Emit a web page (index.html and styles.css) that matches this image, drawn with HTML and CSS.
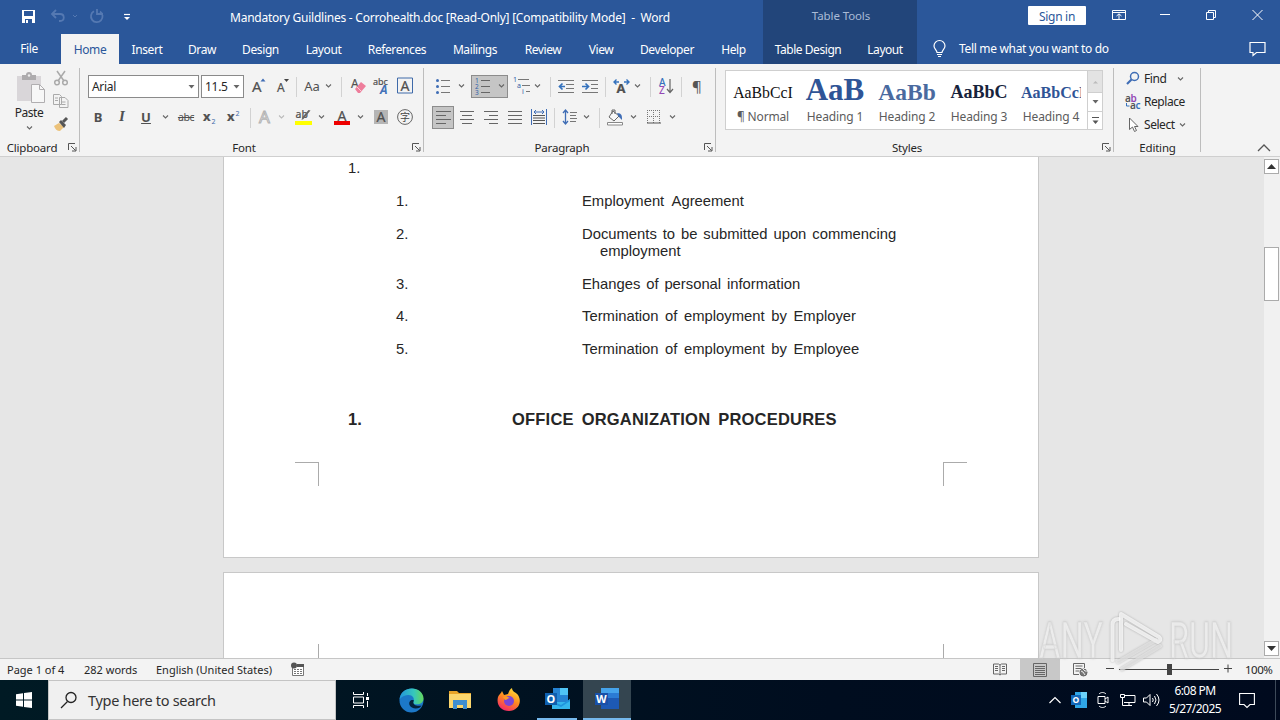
FILE: index.html
```html
<!DOCTYPE html>
<html lang="en">
<head>
  <meta charset="UTF-8">
  <meta name="viewport" content="width=device-width, initial-scale=1.0">
  <title>Mandatory Guildlines - Corrohealth.doc - Word</title>
  <link rel="stylesheet" href="styles.css">
</head>
<body>
  <!-- shared symbols -->
  <svg class="defs" width="0" height="0">
    <symbol id="chev" viewBox="0 0 7 4"><path d="M1 .5l2.500 2.500L6 .5" fill="none" stroke="#666" stroke-width="1.1"/></symbol>
    <symbol id="tri" viewBox="0 0 7 4"><path d="M.5 0h6L3.500 3.500z" fill="#666"/></symbol>
    <symbol id="launch" viewBox="0 0 9 9"><path d="M.5 7V.5H7M3 3l4.500 4.500M8 4v4H4" fill="none" stroke="#555"/></symbol>
  </svg>

  <header class="header">
    <div class="head-main">
      <div class="titlebar">
        <svg class="qat" width="120" height="20" viewBox="0 0 120 20" fill="none">
          <path d="M2 3h13v13H2z" fill="#fff"/><path d="M4 4h9v5H4zM5 12h7v4H5z" fill="#2b579a"/><path d="M6 13h2v3H6z" fill="#fff"/>
          <path d="M36 3l-4 4 4 4M32 7h8c5 0 5 7 0 7h-1" stroke="#5579b2" stroke-width="1.800"/>
          <path d="M53 8l2 2 2-2" stroke="#5579b2"/>
          <path d="M80 4.500a5.800 5.800 0 1 1-6-.3M77 2v5h6" stroke="#5579b2" stroke-width="1.800"/>
          <path d="M104 7.500h6" stroke="#fff" stroke-width="1.200"/><path d="M104 10h6l-3 3z" fill="#fff"/>
        </svg>
        <span class="doc-title">Mandatory Guildlines - Corrohealth.doc [Read-Only] [Compatibility Mode]  -  Word</span>
      </div>
      <nav class="tabs">
        <a class="file">File</a><a class="active">Home</a><a>Insert</a><a>Draw</a><a>Design</a><a>Layout</a><a>References</a><a>Mailings</a><a>Review</a><a>View</a><a>Developer</a><a>Help</a>
      </nav>
    </div>
    <div class="head-context">
      <div class="context-title">Table Tools</div>
      <nav class="context-tabs"><a>Table Design</a><a>Layout</a></nav>
    </div>
    <div class="head-right">
      <div class="window-row">
        <button class="signin">Sign in</button>
        <svg width="14" height="12" viewBox="0 0 14 12" fill="none" stroke="#fff"><path d="M.5 1.500h13v9H.5zM.5 3.500h13M7 10V5M4.500 7L7 4.800 9.500 7"/></svg>
        <svg width="10" height="12" viewBox="0 0 10 12"><path d="M0 5.500h10" stroke="#fff"/></svg>
        <svg width="10" height="12" viewBox="0 0 10 12" fill="none" stroke="#fff"><path d="M.5 3.500h7v7h-7zM2.500 3.500v-2h7v7h-2"/></svg>
        <svg width="11" height="12" viewBox="0 0 11 12" stroke="#fff"><path d="M.5 1l10 10M10.500 1l-10 10"/></svg>
      </div>
      <div class="tell-row">
        <svg width="13" height="18" viewBox="0 0 13 18" fill="none" stroke="#fff" stroke-width="1.200"><path d="M4 12.500c0-2.500-3-3.500-3-6.500a5.300 5.300 0 0 1 11 0c0 3-3 4-3 6.500zM4 14.500h5M5 16.500h3"/></svg>
        <span>Tell me what you want to do</span>
        <svg class="comment" width="17" height="16" viewBox="0 0 17 16" fill="none" stroke="#fff" stroke-width="1.200"><path d="M1 1.500h15v10H7.500l-3.500 3v-3H1z"/></svg>
      </div>
    </div>
  </header>

  <section class="ribbon">
    <div class="group clipboard">
      <div class="clip-body">
        <div class="paste">
          <svg width="30" height="32" viewBox="0 0 30 32"><path d="M1 4h24v25H1z" fill="#d9d6d9"/><path d="M6 3h4a3 3 0 0 1 6 0h4v5H6z" fill="#adabad"/><circle cx="13" cy="3.500" r="1.200" fill="#eee"/><path d="M15.500 12.500h8l5 5v13h-13z" fill="#f7f7f7" stroke="#b0aeb0"/><path d="M23.500 12.500v5h5" fill="none" stroke="#b0aeb0"/></svg>
          <span>Paste</span>
          <svg width="7" height="4"><use href="#chev"/></svg>
        </div>
        <div class="clip-side">
          <svg width="16" height="16" viewBox="0 0 16 16" fill="none" stroke="#aaa" stroke-width="1.500"><path d="M4 1l7 10M12 1L5 11"/><circle cx="4" cy="12.500" r="2.300"/><circle cx="12" cy="12.500" r="2.300"/></svg>
          <svg width="16" height="16" viewBox="0 0 16 16" fill="#f3f3f3" stroke="#aaa"><path d="M.5 1.500h6l2 2v8h-8zM6.500 4.500h5.500l3 3v7H6.500zM8.500 9h4M8.500 11.500h4M2 5h3M2 7.500h3"/></svg>
          <svg width="16" height="16" viewBox="0 0 16 16"><path d="M1 10l5-3 5 4-4 4c-3 0-5-2-6-5z" fill="#ecc27a"/><path d="M6 6l2-2 5 5-2 3z" fill="#555"/><path d="M10 6l4-4" stroke="#555" stroke-width="3"/></svg>
        </div>
      </div>
      <div class="group-label">Clipboard<svg width="9" height="9"><use href="#launch"/></svg></div>
    </div>

    <div class="group font">
      <div class="row font-row1">
        <div class="combo">Arial<svg width="7" height="4"><use href="#tri"/></svg></div>
        <div class="combo size">11.5<svg width="7" height="4"><use href="#tri"/></svg></div>
        <svg width="14" height="18" viewBox="0 0 14 18"><text x="0" y="15" class="ico" font-size="15">A</text><path d="M8.500 4.500l2.500-3 2.500 3z" fill="#3f6db5"/></svg>
        <svg width="14" height="18" viewBox="0 0 14 18"><text x="1" y="15" class="ico" font-size="12">A</text><path d="M8 2h5l-2.500 3z" fill="#444"/></svg>
        <i class="sep"></i>
        <span class="aa">Aa</span>
        <svg width="7" height="4"><use href="#chev"/></svg>
        <i class="sep"></i>
        <svg width="16" height="18" viewBox="0 0 16 18"><text x="1" y="11" class="ico" font-size="12">A</text><path d="M5 12l6-7 5 4-6 7H8z" fill="#ee7d9b"/><path d="M7 10l4 4" stroke="#f8cdd7"/></svg>
        <svg width="16" height="18" viewBox="0 0 16 18"><text x="0" y="7.500" class="ico" font-size="9">abc</text><text x="7" y="17" font-family="Noto Sans" font-style="italic" font-weight="bold" font-size="12" fill="#4472b8">A</text></svg>
        <svg width="16" height="17" viewBox="0 0 16 17"><path d="M.5 1h15v15H.5z" fill="none" stroke="#3f6aa9"/><text x="3.500" y="13.500" class="ico" font-size="14">A</text></svg>
      </div>
      <div class="row font-row2">
        <b class="ltr">B</b>
        <i class="ltr serif">I</i>
        <u class="ltr">U</u>
        <svg width="7" height="4"><use href="#chev"/></svg>
        <s class="strike">abc</s>
        <svg width="14" height="16" viewBox="0 0 14 16"><text x="0" y="12" class="ico bold" font-size="13">x</text><text x="8.500" y="15" font-family="Noto Sans" font-size="7" fill="#3f6aa9">2</text></svg>
        <svg width="14" height="16" viewBox="0 0 14 16"><text x="0" y="12" class="ico bold" font-size="13">x</text><text x="8.500" y="7" font-family="Noto Sans" font-size="7" fill="#3f6aa9">2</text></svg>
        <i class="sep"></i>
        <svg width="14" height="16" viewBox="0 0 14 16"><text x="1" y="14" font-family="Noto Sans" font-size="17" fill="#f8f8f8" stroke="#b3b3b3" stroke-width="1">A</text></svg>
        <svg class="dim" width="7" height="4"><use href="#chev"/></svg>
        <svg class="end" width="20" height="18" viewBox="0 0 20 18"><text x="1.500" y="10" class="ico" font-size="10.500">ab</text><path d="M16.500 2.500l-7 8.500-2 1 1-3 6-7z" fill="#666"/><path d="M1 13h17v4H1z" fill="#ff0"/></svg>
        <svg width="7" height="4"><use href="#chev"/></svg>
        <svg width="16" height="18" viewBox="0 0 16 18"><text x="3.500" y="12.500" class="ico" font-size="14">A</text><path d="M0 13h16v4H0z" fill="#e00"/></svg>
        <svg width="7" height="4"><use href="#chev"/></svg>
        <svg width="14" height="16" viewBox="0 0 14 16"><path d="M0 1h14v14H0z" fill="#b5b5b5"/><text x="2.500" y="13" class="ico" font-size="14">A</text></svg>
        <svg width="16" height="16" viewBox="0 0 16 16"><circle cx="8" cy="8" r="7.400" fill="none" stroke="#666"/><text x="3" y="12" font-family="Noto Sans CJK SC" font-size="10" fill="#444">字</text></svg>
      </div>
      <div class="group-label">Font<svg width="9" height="9"><use href="#launch"/></svg></div>
    </div>

    <div class="group paragraph">
      <div class="row para-row1">
        <svg width="16" height="16" viewBox="0 0 16 16"><path d="M6 2.500h9M6 8.500h9M6 14.500h9" stroke="#777"/><g fill="#3f6db5"><circle cx="2.500" cy="2.500" r="1.500"/><circle cx="2.500" cy="8.500" r="1.500"/><circle cx="2.500" cy="14.500" r="1.500"/></g></svg>
        <svg width="7" height="4"><use href="#chev"/></svg>
        <div class="pressed num">
          <svg width="16" height="18" viewBox="0 0 16 18"><path d="M6 3.500h9M6 9.500h9M6 15.500h9" stroke="#666"/><g font-family="Noto Sans" font-size="6.500" fill="#2f61a8"><text x="0" y="5.500">1</text><text x="0" y="11.500">2</text><text x="0" y="17.500">3</text></g></svg>
          <svg width="7" height="4"><use href="#chev"/></svg>
        </div>
        <svg width="18" height="17" viewBox="0 0 18 17"><path d="M5 2.500h11M9 8.500h8M13 14.500h4" stroke="#777"/><g font-family="Noto Sans" font-size="7" fill="#2f61a8"><text x="0" y="5">1</text><text x="4" y="11">a</text><text x="9" y="17">i</text></g></svg>
        <svg width="7" height="4"><use href="#chev"/></svg>
        <i class="sep"></i>
        <svg width="16" height="16" viewBox="0 0 16 16"><path d="M0 2.500h16M8 6.500h8M8 10.500h8M0 14.500h16" stroke="#777"/><path d="M7 8.500H2M4.500 5.500l-3 3 3 3" fill="none" stroke="#3572bd" stroke-width="1.700"/></svg>
        <svg class="end" width="16" height="16" viewBox="0 0 16 16"><path d="M0 2.500h16M9 6.500h7M9 10.500h7M0 14.500h16" stroke="#777"/><path d="M0 8.500h6M3.500 5.500l3 3-3 3" fill="none" stroke="#3572bd" stroke-width="1.700"/></svg>
        <i class="sep"></i>
        <svg width="17" height="16" viewBox="0 0 17 16"><text x="3.500" y="15" class="ico bold" font-size="13">A</text><path d="M1 4h5M3.500 1.500L1 4l2.500 2.500M11 4h5M13.500 1.500L16 4l-2.500 2.500" fill="none" stroke="#3572bd" stroke-width="1.400"/></svg>
        <svg width="7" height="4"><use href="#chev"/></svg>
        <i class="sep"></i>
        <svg width="16" height="18" viewBox="0 0 16 18"><g font-family="Noto Sans" font-weight="500" font-size="10"><text x="1" y="8.500" fill="#3572bd">A</text><text x="1" y="17" fill="#9347b5">Z</text></g><path d="M12 2v13M9 12l3 3.500L15 12" fill="none" stroke="#666" stroke-width="1.200"/></svg>
        <i class="sep"></i>
        <span class="pilcrow">¶</span>
      </div>
      <div class="row para-row2">
        <div class="pressed left"><svg width="15" height="14" viewBox="0 0 15 14"><path d="M0 1.500h15M0 5.500h10M0 9.500h15M0 13.500h10" stroke="#666"/></svg></div>
        <svg width="14" height="14" viewBox="0 0 14 14"><path d="M0 1.500h14M2 5.500h10M0 9.500h14M2 13.500h10" stroke="#666"/></svg>
        <svg width="14" height="14" viewBox="0 0 14 14"><path d="M0 1.500h14M5 5.500h9M0 9.500h14M5 13.500h9" stroke="#666"/></svg>
        <svg width="14" height="14" viewBox="0 0 14 14"><path d="M0 1.500h14M0 5.500h14M0 9.500h14M0 13.500h14" stroke="#666"/></svg>
        <svg width="16" height="16" viewBox="0 0 16 16"><path d="M.5 0v16M15.500 0v16" stroke="#3f6db5"/><path d="M2 6.500h12M2 9h12M2 11.500h12M2 14.500h12" stroke="#555"/><path d="M3 3h10M5 1L3 3l2 2M11 1l2 2-2 2" fill="none" stroke="#3f6db5"/></svg>
        <i class="sep"></i>
        <svg width="16" height="16" viewBox="0 0 16 16"><path d="M8 3.500h7M8 6.500h6M8 9.500h7M8 12.500h6" stroke="#777"/><path d="M3.500 1v14M1 4l2.500-3L6 4M1 12l2.500 3L6 12" fill="none" stroke="#3f6db5" stroke-width="1.300"/></svg>
        <svg width="7" height="4"><use href="#chev"/></svg>
        <i class="sep"></i>
        <svg width="17" height="16" viewBox="0 0 17 16"><path d="M6 2l6 5-5 5-5-4z" fill="#f8f8f8" stroke="#666"/><path d="M5 5V1h3v4" fill="none" stroke="#666"/><path d="M10 4c5 0 5 3 5 7l-3-3z" fill="#3f6db5"/><path d="M.5 13.500h15V16H.5z" fill="#fff" stroke="#888"/></svg>
        <svg width="7" height="4"><use href="#chev"/></svg>
        <svg width="14" height="14" viewBox="0 0 14 14"><path d="M.5 0v13M6.500 0v13M12.500 0v13M0 .5h13M0 6.500h13" stroke="#777" stroke-dasharray="1 1"/><path d="M0 13h14" stroke="#555"/></svg>
        <svg width="7" height="4"><use href="#chev"/></svg>
      </div>
      <div class="group-label">Paragraph<svg width="9" height="9"><use href="#launch"/></svg></div>
    </div>

    <div class="group styles">
      <div class="gallery">
        <div class="style"><div class="sample normal"><span>AaBbCcI</span></div><span>¶ Normal</span></div>
        <div class="style"><div class="sample h1"><span>AaB</span></div><span>Heading 1</span></div>
        <div class="style"><div class="sample h2"><span>AaBb</span></div><span>Heading 2</span></div>
        <div class="style"><div class="sample h3"><span>AaBbC</span></div><span>Heading 3</span></div>
        <div class="style"><div class="sample h4"><span>AaBbCcI</span></div><span>Heading 4</span></div>
        <div class="gallery-scroll">
          <div class="off"><svg width="7" height="4" viewBox="0 0 7 4"><path d="M1 3.500L3.500 1 6 3.500z" fill="#bbb"/></svg></div>
          <div><svg width="7" height="4"><use href="#tri"/></svg></div>
          <div><svg width="7" height="8" viewBox="0 0 7 8"><path d="M0 .5h7" stroke="#555"/><path d="M.5 3.500h6l-3 3.500z" fill="#555"/></svg></div>
        </div>
      </div>
      <div class="group-label">Styles<svg width="9" height="9"><use href="#launch"/></svg></div>
    </div>

    <div class="group editing">
      <div class="edit-list">
        <div><svg width="16" height="16" viewBox="0 0 16 16" fill="none" stroke="#3f6db5"><circle cx="9.500" cy="5.500" r="4" stroke-width="1.500"/><path d="M6.500 8.500L2 13" stroke-width="2.200"/></svg><span>Find</span><svg class="far" width="7" height="4"><use href="#chev"/></svg></div>
        <div><svg width="16" height="16" viewBox="0 0 16 16"><g font-family="Noto Sans" font-weight="600" font-size="10"><text x="0" y="7.500" fill="#555">a<tspan fill="#9347b5">b</tspan></text><text x="5" y="15" fill="#555">a<tspan fill="#3572bd">c</tspan></text></g><path d="M1.500 9v3h3" fill="none" stroke="#3572bd"/></svg><span>Replace</span></div>
        <div><svg width="16" height="16" viewBox="0 0 16 16"><path d="M4.500 1v11.500l3-2.500 2 4.500 2-1-2-4h3.500z" fill="#fff" stroke="#666"/></svg><span>Select</span><svg class="near" width="7" height="4"><use href="#chev"/></svg></div>
      </div>
      <div class="group-label">Editing</div>
    </div>
    <svg class="collapse" width="14" height="8" viewBox="0 0 14 8"><path d="M1 7l6-6 6 6" fill="none" stroke="#555" stroke-width="1.300"/></svg>
  </section>

  <main class="workspace">
    <div class="pages">
      <article class="page first">
        <div class="line outer"><span class="n">1.</span></div>
        <div class="line inner"><span class="n">1.</span><p class="l1">Employment Agreement</p></div>
        <div class="line inner"><span class="n">2.</span><p class="l2">Documents to be submitted upon commencing<br><span class="hang">employment</span></p></div>
        <div class="line inner three"><span class="n">3.</span><p class="l3">Ehanges of personal information</p></div>
        <div class="line inner"><span class="n">4.</span><p class="l4">Termination of employment by Employer</p></div>
        <div class="line inner"><span class="n">5.</span><p class="l4">Termination of employment by Employee</p></div>
        <div class="line heading"><span class="n">1.</span><h2>OFFICE ORGANIZATION PROCEDURES</h2></div>
        <div class="crops"><i class="crop tl"></i><i class="crop tr"></i></div>
      </article>
      <article class="page second">
        <div class="crops"><i class="crop side-l"></i><i class="crop side-r"></i></div>
      </article>
    </div>
    <div class="scrollbar">
      <div class="arrow"><svg width="9" height="5"><path d="M0 5h9L4.500 0z" fill="#333"/></svg></div>
      <div class="thumb"></div>
      <div class="arrow down"><svg width="9" height="5"><path d="M0 0h9L4.500 5z" fill="#333"/></svg></div>
    </div>
  </main>

  <footer class="status">
    <span class="s-page">Page 1 of 4</span>
    <span class="s-words">282 words</span>
    <span class="s-lang">English (United States)</span>
    <svg width="14" height="14" viewBox="0 0 14 14"><path d="M1.500 4v8.500h11V2.500H6" fill="#fff" stroke="#777"/><path d="M6 1h7v3H6z" fill="#555"/><circle cx="3" cy="2.500" r="3" fill="#555"/><path d="M3 6.500h9M3 8.500h9M3 10.500h9" stroke="#777" stroke-dasharray="2 1"/></svg>
    <div class="views">
      <svg width="14" height="13" viewBox="0 0 14 13" fill="none" stroke="#666"><path d="M7 2L5.500 1H.5v10h5L7 12l1.500-1h5V1h-5zV12M2 3.500h3M2 5.500h3M2 7.500h3M9 3.500h3M9 5.500h3M9 7.500h3"/></svg>
      <div class="view-on"><svg width="14" height="14" viewBox="0 0 14 14" fill="none" stroke="#666"><path d="M.5.5h13v13H.5zM2 3.500h10M2 5.500h10M2 7.500h10M2 9.500h10M2 11.500h10"/></svg></div>
      <svg width="15" height="14" viewBox="0 0 15 14" fill="none" stroke="#666"><path d="M6 11.500H.5V.5h11V5M2.500 3h7M2.500 5.500h6M2.500 8h4"/><circle cx="10.500" cy="9.500" r="3.500" fill="#777"/><path d="M8 8l2 1 2 3M10 6l2 2h2" stroke="#eee"/></svg>
      <svg class="zoom" width="126" height="12" viewBox="0 0 126 12"><path d="M0 4.500h8M13 5.500h100M118 4.500h8M122 .5v8" stroke="#444"/><path d="M61 0h5v11h-5z" fill="#444"/></svg>
      <span class="pct">100%</span>
    </div>
  </footer>

  <div class="taskbar">
    <div class="start"><svg width="16" height="16" viewBox="0 0 16 16" fill="#fff"><path d="M0 2.300L7 1.200V7.500H0zM8 1l8-1v7.500H8zM0 8.500h7v6.300L0 13.700zM8 8.500h8V16l-8-1z"/></svg></div>
    <div class="search"><svg width="18" height="18" viewBox="0 0 18 18" fill="none" stroke="#222" stroke-width="1.300"><circle cx="11" cy="6.500" r="5"/><path d="M7.500 10.500L1 17"/></svg><span>Type here to search</span></div>
    <div class="apps">
      <div><svg width="18" height="16" viewBox="0 0 18 16" fill="none" stroke="#fff"><path d="M1.500 0v2.500h10V0M1.500 16v-2.500h10V16M1.500 5h10v6h-10zM15.500 1v3M15.500 9v6"/><path d="M14 5h3v3h-3z" fill="#fff" stroke="none"/></svg></div>
      <div><svg width="25" height="25" viewBox="0 0 25 25"><defs><linearGradient id="eg" x1="0" x2="1"><stop offset="0" stop-color="#2394dc"/><stop offset=".6" stop-color="#36c7bc"/><stop offset="1" stop-color="#65d75b"/></linearGradient></defs><circle cx="12.500" cy="12.500" r="12" fill="#1c78c8"/><path d="M.5 12C1 4 7 .5 13 .5s11.500 4 11.500 10c0 5-5 6.500-9 5.500-1.500-.5-2-1-1-2.500C16 10 13 6.500 9 7c-5 .5-8 3-8.500 5z" fill="url(#eg)"/><path d="M14.500 13.500c-1 3.500 3.500 5 8 4l-1.500 2c-4 2-9 1-10.500-2.500-1-3 1-5 3-5 1.500 0 1.500.5 1 1.500z" fill="#04223a"/></svg></div>
      <div><svg width="22" height="20" viewBox="0 0 22 20"><path d="M0 1h8l2 2h12v6H0z" fill="#e8a428"/><path d="M0 4h22v14H0z" fill="#fbd66d"/><path d="M4 19v-9h14v9h-4v-4H8v4z" fill="#3e8ed0"/></svg></div>
      <div><svg width="24" height="24" viewBox="0 0 24 24"><defs><linearGradient id="ff" x1=".8" y1="0" x2=".3" y2="1"><stop offset="0" stop-color="#ffe33b"/><stop offset=".5" stop-color="#ff8a20"/><stop offset="1" stop-color="#f5266b"/></linearGradient></defs><path d="M5 3l2 4 4-1c1-3 2-5 4-6 0 4 4 4 6 7 5 8-1 16-9 16S-1 17 1 9c1-3 3-3 4-6z" fill="url(#ff)"/><circle cx="12" cy="13" r="5" fill="#7c45d6"/><path d="M6 9c3-1 5 0 7 1-2 0-3 2-5 2z" fill="#ff9b25"/></svg></div>
      <div class="run"><svg width="25" height="22" viewBox="0 0 25 22"><path d="M8 0h15v14H8z" fill="#2583d3"/><path d="M15 0h8v7h-8z" fill="#4fc4f5"/><path d="M7 14h16l2-3v10H7z" fill="#35b6ec"/><path d="M7 13l9 4 9-6v2l-9 6-9-4z" fill="#1f94dd"/><path d="M0 5h12v12H0z" fill="#0f5fae"/><text x="1.500" y="15" class="app" font-size="11">O</text></svg></div>
      <div class="run current"><svg width="25" height="22" viewBox="0 0 25 22"><path d="M6 0h18v21H6z" fill="#1d59b4"/><path d="M6 0h18v5H6z" fill="#45a3eb"/><path d="M6 5h18v5H6z" fill="#2b7bd4"/><path d="M0 5h13v12H0z" fill="#1950a8"/><text x="1" y="15" class="app" font-size="11">W</text></svg></div>
    </div>
    <div class="tray">
      <svg width="12" height="8" viewBox="0 0 12 8" fill="none" stroke="#fff" stroke-width="1.200"><path d="M.5 7L6 1.500 11.500 7"/></svg>
      <svg width="16" height="16" viewBox="0 0 16 16"><path d="M4 0h12v16H4z" fill="#2fa6e6"/><path d="M10 0h6v6h-6z" fill="#6bd2fa"/><path d="M0 3h10v10H0z" fill="#1267b8"/><text x="1.500" y="11" class="app" font-size="8.500">O</text></svg>
      <svg width="12" height="16" viewBox="0 0 12 16" fill="none" stroke="#fff"><path d="M1 4.500h7v7H1zM8 7l3-2v6L8 9M2 2c2-2 5-2 7 0M2 14c2 2 5 2 7 0"/></svg>
      <svg width="17" height="14" viewBox="0 0 17 14" fill="none" stroke="#fff"><path d="M6 2.500h10v7H5M1.500 1.500h4v3h-4zM3.500 5v7.500H13M10 10v2.500"/></svg>
      <svg width="17" height="14" viewBox="0 0 17 14" fill="none" stroke="#fff"><path d="M.5 5v4h3L7 12.500v-11L3.500 5zM9.500 5q1.500 2 0 4M11.500 3q3 4 0 8M13.500 1q5 6 0 12"/></svg>
      <div class="clock"><span>6:08 PM</span><span>5/27/2025</span></div>
      <svg width="16" height="17" viewBox="0 0 16 17" fill="none" stroke="#fff" stroke-width="1.100"><path d="M.6 1.500h14.800v11H11l-3 3-3-3H.6z"/></svg>
    </div>
  </div>

  <svg class="watermark" width="200" height="66" viewBox="0 0 200 66">
    <g class="wm-text"><text x="3" y="52" textLength="64" lengthAdjust="spacingAndGlyphs">ANY</text><text x="133" y="52" textLength="64" lengthAdjust="spacingAndGlyphs">RUN</text></g>
    <g class="wm-logo"><path d="M76.500 54V19q0-6 6-6"/><path d="M85 44V8l38 23q3 3-1 5L90 18"/><path class="faint" d="M124 40L86 63M120 34L82 56"/></g>
  </svg>
</body>
</html>
```
FILE: styles.css
```css
* {
  box-sizing: border-box;
}
body {
  margin: 0;
  width: 1280px;
  height: 720px;
  overflow: hidden;
  position: relative;
  font-family: "Noto Sans", "Open Sans", sans-serif;
  font-size: 12px;
  color: #262626;
  background: #e6e6e6;
}
svg {
  display: block;
  flex: none;
  overflow: visible;
}
.defs {
  position: absolute;
}

/* title bar and tabs */
.header {
  display: grid;
  grid-template-columns: 763px 154px 1fr;
  height: 64px;
  background: #2b579a;
  color: #fff;
}
.titlebar {
  display: flex;
  align-items: center;
  height: 34px;
  padding-left: 20px;
}
.doc-title {
  margin-left: 90px;
  white-space: pre;
  letter-spacing: -0.24px;
}
.tabs {
  display: grid;
  grid-template-columns: 61px 58px 56px 54px 63px 63px 84px 72px 64px 52px 80px 53px;
  height: 30px;
  line-height: 32px;
  text-align: center;
  letter-spacing: -0.4px;
}
.tabs a {
  height: 30px;
}
.tabs .file {
  padding-right: 3px;
  line-height: 30px;
}
.active {
  background: #f3f3f3;
  color: #2b579a;
}
.head-context {
  height: 64px;
  background: #22457a;
}
.context-title {
  height: 34px;
  padding-left: 2px;
  line-height: 32px;
  text-align: center;
  color: #a9bbd6;
  font-size: 11.5px;
  letter-spacing: -0.1px;
}
.context-tabs {
  display: grid;
  grid-template-columns: 90px 64px;
  height: 30px;
  line-height: 32px;
  text-align: center;
  letter-spacing: -0.45px;
}
.window-row {
  display: flex;
  align-items: center;
  height: 30px;
  padding-left: 111px;
}
.signin {
  width: 58px;
  height: 19px;
  margin-right: 26px;
  padding: 0;
  border: 0;
  border-radius: 1px;
  background: #fff;
  color: #2b579a;
  font: 12px/21px "Noto Sans", sans-serif;
  letter-spacing: -0.3px;
}
.window-row svg + svg {
  margin-left: 34px;
}
.window-row svg:last-child,
.window-row svg:nth-child(4) {
  margin-left: 36px;
}
.tell-row {
  display: flex;
  align-items: center;
  height: 34px;
  padding: 3px 14px 0 16px;
}
.tell-row span {
  margin-left: 13px;
  letter-spacing: -0.32px;
}
.comment {
  margin-left: auto;
}

/* ribbon */
.ribbon {
  display: grid;
  grid-template-columns: 80px 344px 292px 398px 87px 1fr;
  height: 93px;
  background: #f3f3f3;
  border-bottom: 1px solid #cfcfcf;
}
.group {
  display: flex;
  flex-direction: column;
  position: relative;
  height: 88px;
  margin-top: 4px;
}
.group::after {
  content: "";
  position: absolute;
  right: 0;
  top: 0;
  height: 84px;
  border-right: 1px solid #bdbdbd;
}
.group-label {
  display: flex;
  justify-content: center;
  align-items: center;
  position: relative;
  margin-top: auto;
  height: 18px;
  padding-right: 16px;
  font-size: 11.5px;
  letter-spacing: -0.2px;
}
.group-label svg {
  position: absolute;
  right: 3px;
}
.editing .group-label {
  padding-right: 0;
}
.row {
  display: grid;
  align-items: center;
  justify-items: center;
  height: 23px;
  margin-top: 7px;
}
.row + .row {
  margin-top: 8px;
}
.row > svg,
.row > span,
.row > .ltr,
.row > .strike {
  margin-bottom: 2px;
}
.end {
  justify-self: end;
}
.dim {
  opacity: .4;
}
.sep {
  width: 1px;
  height: 20px;
  background: #d2d2d2;
}
.ico {
  font-family: "Noto Sans", sans-serif;
  fill: #505050;
  stroke: #505050;
  stroke-width: .2;
}
.bold {
  font-weight: 700;
}

.clip-body {
  display: flex;
}
.paste {
  display: flex;
  flex-direction: column;
  align-items: center;
  width: 32px;
  margin: 4px 0 0 13px;
}
.paste > svg:first-child {
  margin-left: 4px;
}
.paste span {
  margin: 1px 0 5px;
  line-height: 16px;
  letter-spacing: -0.5px;
}
.clip-side {
  display: grid;
  gap: 7px;
  margin: 2px 0 0 8px;
}

.font-row1 {
  grid-template-columns: 111px 45px 30px 18px 9px 22px 10px 16px 17px 30px 17px;
  margin-left: 8px;
}
.font-row2 {
  grid-template-columns: 24px 24px 24px 14px 28px 20px 27px 7px 22px 10px 28px 14px 28px 8px 34px 14px;
  margin-left: 6px;
}
.combo {
  display: flex;
  align-items: center;
  justify-content: space-between;
  justify-self: start;
  width: 111px;
  height: 23px;
  padding: 0 3px;
  border: 1px solid #8a8a8a;
  background: #fff;
  letter-spacing: -0.3px;
}
.size {
  width: 43px;
  justify-self: end;
}
.aa {
  font-size: 13px;
  color: #505050;
}
.ltr {
  font-size: 13px;
  font-weight: 700;
  color: #505050;
}
.serif {
  font-family: "Liberation Serif", serif;
  font-size: 15px;
}
.strike {
  color: #505050;
  font-size: 10.5px;
  letter-spacing: -0.4px;
}

.para-row1 {
  grid-template-columns: 25px 12px 45px 19px 12px 15px 16px 24px 15px 16px 16px 10px 22px 9px 22px;
  margin-left: 6px;
}
.para-row2 {
  grid-template-columns: 24px 24px 24px 24px 24px 7px 24px 8px 19px 12px 25px 15px 22px;
  margin-left: 7px;
}
.pressed {
  display: flex;
  align-items: center;
  justify-content: center;
  height: 23px;
  padding-bottom: 1px;
  border: 1px solid #8c8c8c;
  background: #c5c5c5;
}
.num {
  width: 37px;
  gap: 7px;
  padding-left: 1px;
}
.left {
  width: 22px;
}
.pilcrow {
  color: #555;
  font-size: 15px;
}

.gallery {
  display: flex;
  width: 378px;
  height: 60px;
  margin: 2px 0 0 9px;
  padding-left: 1px;
  border: 1px solid #cfcfcf;
  background: #fff;
}
.style {
  width: 72px;
  text-align: center;
  color: #5c5c5c;
  letter-spacing: -0.15px;
}
.sample {
  display: flex;
  align-items: baseline;
  justify-content: center;
  height: 37px;
  overflow: hidden;
  font-family: "Liberation Serif", serif;
  font-weight: 700;
  letter-spacing: 0;
  color: #2f5496;
}
.sample::before {
  content: "";
  height: 27px;
}
.normal {
  font-size: 15.8px;
  font-weight: 400;
  color: #111;
}
.h1 {
  font-size: 31px;
}
.h1::before,
.h2::before {
  height: 29px;
}
.h2 {
  font-size: 23.5px;
  color: #4a6a9f;
}
.h3 {
  font-size: 18px;
  color: #17233c;
}
.h4 {
  width: 60px;
  margin-left: 6px;
  justify-content: flex-start;
  font-size: 16px;
}
.gallery-scroll {
  display: grid;
  grid-template-rows: 21px 19px 18px;
  width: 15px;
  margin-left: auto;
  border-left: 1px solid #cfcfcf;
}
.gallery-scroll div {
  display: grid;
  place-items: center;
}
.gallery-scroll div + div {
  border-top: 1px solid #cfcfcf;
}
.gallery-scroll .off {
  background: #e3e3e3;
}

.edit-list {
  display: grid;
  grid-auto-rows: 23px;
  margin-top: -1px;
  padding-left: 11px;
}
.edit-list div {
  display: flex;
  align-items: center;
  letter-spacing: -0.45px;
}
.edit-list span {
  margin-left: 3px;
}
.edit-list svg:first-child {
  width: 16px;
}
.edit-list .far {
  margin-left: 11px;
}
.edit-list .near {
  margin-left: 4px;
}
.collapse {
  justify-self: end;
  align-self: end;
  margin: 0 9px 4px 0;
}

/* document */
.workspace {
  display: flex;
  height: 501px;
  overflow: hidden;
}
.pages {
  width: 1264px;
  padding-left: 223px;
}
.page {
  width: 816px;
  border: 1px solid #c8c8c8;
  background: #fff;
  font: 14.8px/17px "Liberation Sans", Arial, sans-serif;
}
.first {
  height: 401px;
  border-top: 0;
  padding-top: 3px;
}
.second {
  height: 100px;
  margin-top: 14px;
  padding-top: 71px;
}
.line {
  display: flex;
  margin-bottom: 16px;
}
.line p,
.line h2 {
  margin: 0;
}
.line .l1 {
  word-spacing: 4px;
}
.line .l2 {
  word-spacing: 1.8px;
}
.line .l3 {
  word-spacing: 1.7px;
}
.line .l4 {
  word-spacing: 2.5px;
}
.three {
  margin-bottom: 15px;
}
.outer,
.heading {
  padding-left: 124px;
}
.inner {
  padding-left: 172px;
}
.inner .n {
  width: 186px;
}
.hang {
  margin-left: 18px;
}
.heading {
  margin: 51px 0 33px;
  font-size: 16.5px;
  font-weight: 700;
  line-height: 20px;
}
.heading .n {
  width: 164px;
}
.heading h2 {
  font-size: 16.5px;
  letter-spacing: 0.2px;
  word-spacing: 3.2px;
}
.crops {
  display: flex;
  justify-content: space-between;
  padding: 0 71px;
}
.crop {
  width: 24px;
  height: 24px;
}
.tl,
.tr {
  border-top: 1px solid #ababab;
}
.tl,
.side-l {
  border-right: 1px solid #ababab;
}
.tr,
.side-r {
  border-left: 1px solid #ababab;
}
.scrollbar {
  display: flex;
  flex-direction: column;
  width: 16px;
  padding: 2px 1px 2px 0;
  background: #f1f1f1;
}
.arrow {
  display: grid;
  place-items: center;
  height: 15px;
  border: 1px solid #ababab;
  background: #fff;
}
.thumb {
  height: 54px;
  margin-top: 73px;
  border: 1px solid #ababab;
  background: #fff;
}
.down {
  margin-top: auto;
}

/* status bar */
.status {
  display: flex;
  align-items: center;
  height: 22px;
  padding-left: 7px;
  border-top: 1px solid #c6c6c6;
  background: #f3f3f3;
  font-size: 11px;
}
.s-page {
  width: 77px;
}
.s-words {
  width: 72px;
}
.s-lang {
  width: 135px;
}
.views {
  display: flex;
  align-items: center;
  margin-left: auto;
  height: 21px;
}
.view-on {
  display: grid;
  place-items: center;
  width: 40px;
  height: 21px;
  margin: 0 13px;
  background: #c8c8c8;
}
.zoom {
  margin-left: 18px;
}
.pct {
  width: 35px;
  margin-left: 13px;
  font-size: 11.5px;
  letter-spacing: -0.5px;
}

/* taskbar */
.taskbar {
  display: flex;
  height: 40px;
  background: linear-gradient(90deg, #001a24, #000d1f 65%, #000a1e);
  color: #fff;
}
.start {
  display: grid;
  place-items: center;
  width: 48px;
}
.search {
  display: flex;
  align-items: center;
  width: 288px;
  padding-left: 11px;
  border: 1px solid #c4c4c4;
  background: #f0f0f0;
  color: #333;
  font-size: 14.5px;
}
.search span {
  margin-left: 10px;
  letter-spacing: -0.3px;
}
.apps {
  display: grid;
  grid-template-columns: 49px 52px 46px 52px 43px 53px;
}
.apps div {
  display: grid;
  place-items: center;
}
.apps .run {
  border-bottom: 2px solid #76b9ed;
  width: 40px;
  margin-left: 2px;
}
.apps .current {
  width: 48px;
  margin-left: 5px;
  background: #344550;
}
.app {
  font-family: "Noto Sans", sans-serif;
  font-weight: 700;
  fill: #fff;
}
.tray {
  display: grid;
  grid-template-columns: repeat(5, 24px) 64px 40px;
  place-items: center;
  margin: 0 4px 0 auto;
  padding-right: 8px;
  border-right: 1px solid #3d4a59;
}
.clock {
  display: flex;
  flex-direction: column;
  align-items: center;
  line-height: 18px;
  letter-spacing: -0.55px;
}

.watermark {
  position: absolute;
  left: 1036px;
  top: 606px;
}
.wm-text {
  font: 400 50px Roboto, sans-serif;
  fill: #fff;
  fill-opacity: .6;
  stroke: #d2d2d2;
  stroke-opacity: .6;
  stroke-width: .8;
  filter: drop-shadow(0 0 1px #bbb);
}
.wm-logo {
  fill: none;
  stroke: #fff;
  stroke-opacity: .75;
  stroke-width: 4;
  stroke-linejoin: round;
  stroke-linecap: round;
  filter: drop-shadow(0 0 1px #999);
}
.faint {
  stroke: #efefef;
  stroke-opacity: .6;
}
```
